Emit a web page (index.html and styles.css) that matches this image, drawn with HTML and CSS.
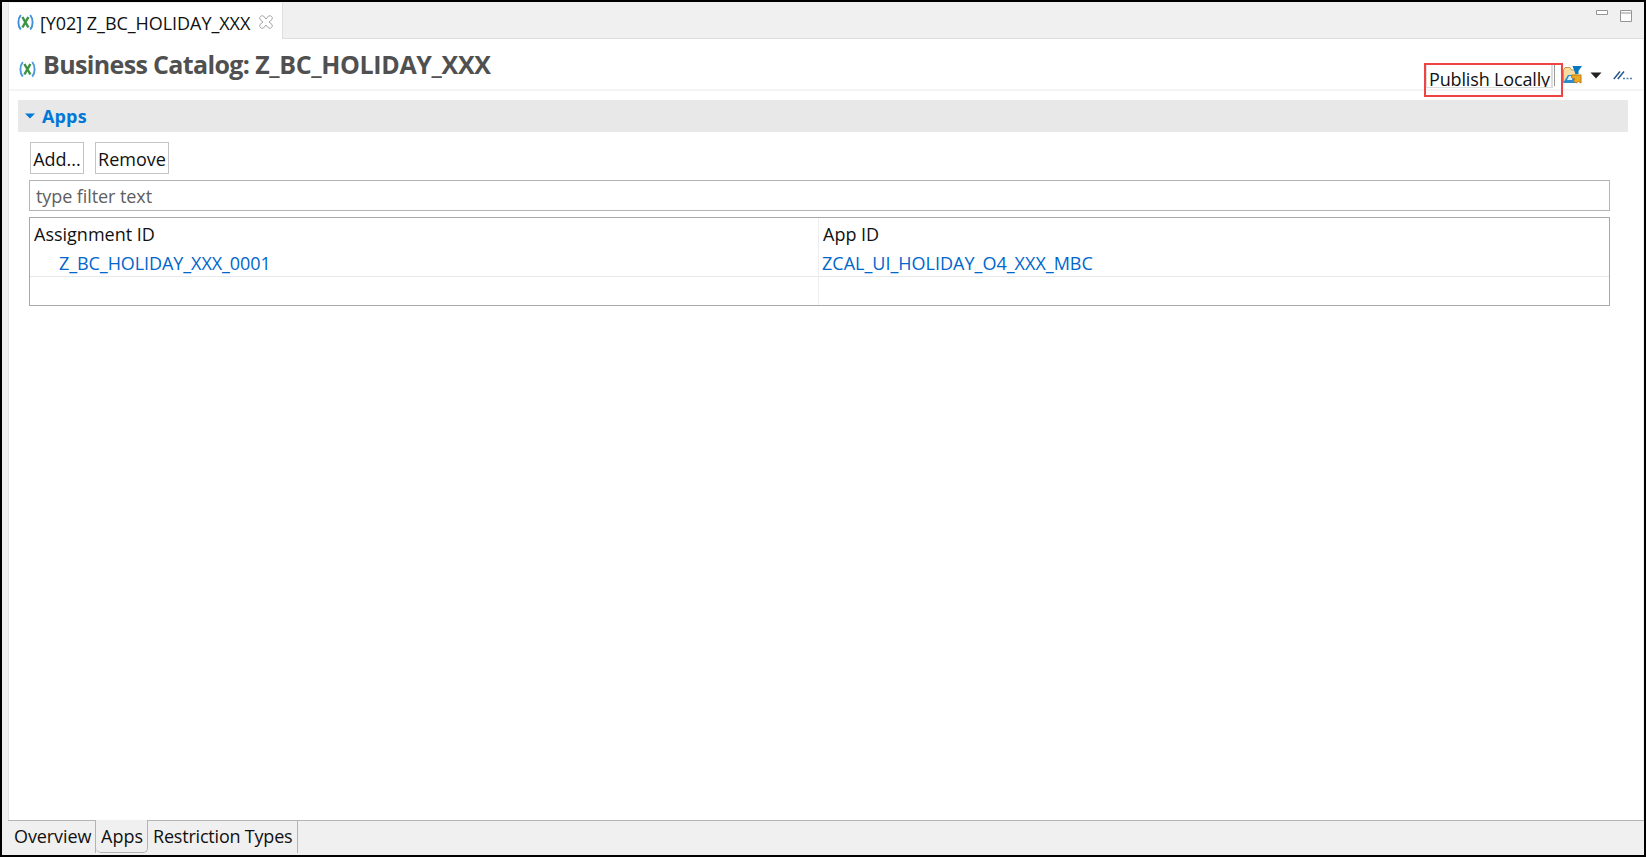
FILE: index.html
```html
<!DOCTYPE html>
<html lang="en">
<head>
<meta charset="utf-8">
<title>Business Catalog</title>
<link rel="stylesheet" href="styles.css">
</head>
<body>
<div class="window">
  <header class="tabbar">
    <div class="editor-tab">
      <svg class="xicon" width="17" height="17" viewBox="0 0 17 17"><g fill="none"><path d="M3.800 1C.6 5 .6 12 3.800 15.500M13.200 1c3.200 4 3.200 11 0 14.500" stroke="#3f8fdb" stroke-width="1.900"/><path d="M5.400 3l6 10.500M11.400 3l-6 10.500" stroke="#3c9445" stroke-width="2.500"/></g></svg>
      <span class="tab-title">[Y02] Z_BC_HOLIDAY_XXX</span>
      <svg class="close" width="14" height="14" viewBox="0 0 14 14"><path d="M.7 2.500L2.500.7 4.500 1 7 4 9.500 1l2-.3 1.800 1.800-.3 2L10 7l3 2.500.3 2-1.800 1.800-2-.3L7 10l-2.500 3-2 .3L.7 11.500 1 9.500 4 7 1 4.500z" fill="#fff" stroke="#a4a4a4"/></svg>
    </div>
    <div class="window-controls">
      <svg width="36" height="13" viewBox="0 0 36 13"><g fill="#fff" stroke="#959595"><path d="M.5.5h11v4H.5zM24.500.5h11v11h-11z"/><path d="M24.500 3h11"/></g></svg>
    </div>
  </header>
  <main class="page">
    <div class="form-head">
      <svg class="xicon" width="17" height="17" viewBox="0 0 17 17"><g fill="none"><path d="M3.800 1C.6 5 .6 12 3.800 15.500M13.200 1c3.200 4 3.200 11 0 14.500" stroke="#4c98de" stroke-width="1.900"/><path d="M5.400 3l6 10.500M11.400 3l-6 10.500" stroke="#3c9445" stroke-width="2.500"/></g></svg>
      <h1 class="title">Business Catalog: <span class="object-name">Z_BC_HOLIDAY_XXX</span></h1>
      <div class="toolbar">
        <div class="highlight"><button class="publish"><span>Publish Locally</span></button><i class="divider"></i></div>
        <svg class="folder" width="19" height="18" viewBox="0 0 19 18"><path d="M.5 16V4L2 1.500h5L8.500 4H13v12z" fill="#f8dda0" stroke="#c89b48"/><path d="M0 17l5-8h7v8z" fill="#2b8bcd"/><path d="M6 10h4l-1 4H4z" fill="#d9eef9"/><path d="M9.500 0H19l-3.500 5v3h-3z" fill="#0877c2"/><path d="M8.500 9h9.500v8l-2.500-1.500L13 17l-2.500-2 1.500-2-3.500-1.500z" fill="#efaa20" stroke="#b87912"/></svg>
        <svg class="caret" width="12" height="7" viewBox="0 0 12 7"><path d="M.5.5h11L6 6.500z" fill="#222"/></svg>
        <svg class="more" width="19" height="9" viewBox="0 0 19 9"><path d="M.8 8L7 .5M4.800 8L11 .5" stroke="#23578e" stroke-width="1.500"/><path d="M10 7.500h2M13.500 7.500h2M17 7.500h2" stroke="#4f82ae" stroke-width="1.500"/></svg>
      </div>
    </div>
    <div class="section-head">
      <svg width="10" height="6" viewBox="0 0 10 6"><path d="M0 .5h10L5 5.500z" fill="#0078d7"/></svg>
      <h2 class="section-title">Apps</h2>
    </div>
    <section class="section-body">
      <div class="actions"><button class="add">Add...</button><button class="remove">Remove</button></div>
      <div class="filter"><span>type filter text</span></div>
      <div class="table">
        <div class="row head"><div class="cell">Assignment ID</div><div class="cell">App ID</div></div>
        <div class="row item"><div class="cell"><a>Z_BC_HOLIDAY_XXX_0001</a></div><div class="cell"><a>ZCAL_UI_HOLIDAY_O4_XXX_MBC</a></div></div>
        <div class="row empty"><div class="cell"></div><div class="cell"></div></div>
      </div>
    </section>
  </main>
  <footer class="page-tabs">
    <div class="page-tab overview">Overview</div>
    <div class="page-tab active">Apps</div>
    <div class="page-tab restrictions">Restriction Types</div>
  </footer>
</div>
</body>
</html>
```
FILE: styles.css
```css
* { box-sizing: border-box; }
body { margin: 0; font: 18px/24px "Open Sans", "Noto Sans", sans-serif; color: #111; background: #fff; }
h1, h2 { margin: 0; }
button { font: inherit; color: inherit; background: #fff; padding: 0; border: 1px solid #c4c4c4; white-space: nowrap; }
svg { display: block; flex: none; }
.window { width: 1646px; height: 857px; border: 2px solid #000; padding: 1px 0 0 6px; background: #f0f0f0; display: flex; flex-direction: column; overflow: hidden; }
.tabbar { height: 36px; flex: none; display: flex; justify-content: space-between; border-bottom: 1px solid #dedede; }
.editor-tab { width: 275px; height: 37px; background: #fff; border-left: 1px solid #e3e3e3; border-right: 1px solid #dedede; display: flex; align-items: flex-start; padding-left: 8px; white-space: nowrap; }
.editor-tab .xicon { margin-top: 11px; }
.tab-title { margin: 8px 0 0 6px; width: 219px; letter-spacing: -0.05px; }
.close { margin-top: 12px; }
.window-controls { padding: 7px 12px 0 0; }
.page { flex: 1; background: #fff; border-left: 1px solid #e3e3e3; margin-right: 1px; }
.form-head { height: 52px; border-bottom: 2px solid #f4f4f4; display: flex; align-items: flex-start; padding-left: 10px; }
.form-head .xicon { margin-top: 22px; }
.title { font-size: 25px; line-height: 34px; margin: 8px 0 0 7px; color: #505050; white-space: nowrap; letter-spacing: -0.64px; }
.object-name { letter-spacing: -0.34px; }
.toolbar { margin-left: auto; display: flex; align-items: flex-start; padding-right: 11px; }
.highlight { width: 139px; height: 34px; margin-top: 24px; border: 2px solid #f04444; display: flex; }
.publish { width: 127px; height: 23px; border: solid #dcdcdc; border-width: 0 2px 1px 1px; overflow: hidden; letter-spacing: -0.15px; text-align: left; padding: 1px 0 0 2px; line-height: 26px; display: flex; align-items: flex-start; }
.divider { width: 1px; height: 21px; margin-left: 1px; background: #999; }
.folder { margin-top: 27px; }
.caret { margin: 33px 0 0 8px; }
.more { margin: 32px 0 0 11px; }
.section-head { height: 32px; margin: 9px 15px 0 9px; background: #e8e8e8; display: flex; align-items: center; padding-left: 7px; }
.section-title { font-size: 18px; color: #0078d7; margin-left: 7px; letter-spacing: 0.15px; }
.section-body { padding: 10px 33px 0 20px; }
.actions { display: flex; gap: 11px; margin-left: 1px; }
.actions button { height: 32px; padding-top: 1px; }
.add { width: 54px; }
.remove { width: 74px; }
.filter { height: 31px; border: 1px solid #b4b4b4; margin-top: 6px; padding: 3px 6px; color: #606060; letter-spacing: -0.08px; }
.table { height: 89px; border: 1px solid #a8a8a8; margin-top: 6px; }
.row { display: grid; grid-template-columns: 789px 1fr; }
.row .cell:first-child { border-right: 1px solid #eee; }
.head .cell { height: 31px; padding: 4px 4px; }
.item .cell { height: 28px; padding: 2px 3px; border-bottom: 1px solid #e8e8e8; color: #0066cc; }
.item .cell:first-child { padding-left: 29px; letter-spacing: -0.08px; }
.empty .cell { height: 28px; }
.page-tabs { height: 35px; flex: none; display: flex; padding-left: 1px; border-top: 1px solid #b4b4b4; }
.page-tab { height: 32px; white-space: nowrap; padding: 3px 0 0 5px; border-right: 1px solid #b4b4b4; }
.overview { width: 87px; letter-spacing: -0.1px; }
.active { width: 52px; margin-top: -1px; padding-top: 4px; height: 33px; background: #f0f0f0; border-bottom: 1px solid #b4b4b4; border-radius: 0 0 5px 5px; }
.restrictions { width: 150px; letter-spacing: -0.2px; }
```
